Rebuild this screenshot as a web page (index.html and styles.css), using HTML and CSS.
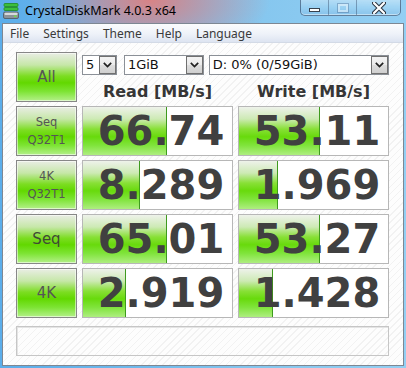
FILE: index.html
```html
<!DOCTYPE html>
<html lang="en">
<head>
    <meta charset="UTF-8">
    <title>CrystalDiskMark 4.0.3 x64</title>
    <link rel="stylesheet" href="styles.css">
</head>
<body>
    <div class="titlebar">
        <svg class="app-icon" width="16" height="16" viewBox="0 0 16 16">
            <rect x="1" y="0.5" width="14" height="3" rx="1" fill="#3cbf3c" stroke="#1f8a1f" stroke-width="0.8"/>
            <rect x="1" y="4.5" width="14" height="3" rx="1" fill="#3cbf3c" stroke="#1f8a1f" stroke-width="0.8"/>
            <rect x="0.5" y="9" width="15" height="6.5" rx="1.5" fill="#8d9399" stroke="#4f555b" stroke-width="0.8"/>
            <rect x="1.5" y="9.8" width="13" height="2.2" rx="1" fill="#d6dadd"/>
            <rect x="11" y="12.5" width="2.5" height="1.5" fill="#6fe04a"/>
        </svg>
        <span class="title">CrystalDiskMark 4.0.3 x64</span>
        <div class="caption">
            <div class="cap min"><span class="min-glyph"></span></div>
            <div class="cap max"><span class="max-glyph"></span></div>
            <div class="cap close">
                <svg width="14" height="12" viewBox="0 0 14 12">
                    <path d="M2 1 L12 11 M12 1 L2 11" stroke="#2b3440" stroke-width="4.2" stroke-linecap="round"/>
                    <path d="M2 1 L12 11 M12 1 L2 11" stroke="#ffffff" stroke-width="2.2" stroke-linecap="round"/>
                </svg>
            </div>
        </div>
    </div>

    <div class="client">
        <div class="menubar">
            <span class="menu-item">File</span>
            <span class="menu-item">Settings</span>
            <span class="menu-item">Theme</span>
            <span class="menu-item">Help</span>
            <span class="menu-item">Language</span>
        </div>

        <div class="panel">
            <div class="grid">
                <div class="label all">All</div>
                <div class="top">
                    <div class="combos">
                        <div class="combo c-count">
                            <span class="combo-text">5</span>
                            <span class="combo-arrow"><svg width="9" height="6" viewBox="0 0 9 6"><path d="M0.8 0.8 L4.5 4.6 L8.2 0.8" fill="none" stroke="#222" stroke-width="1.7"/></svg></span>
                        </div>
                        <div class="combo c-size">
                            <span class="combo-text">1GiB</span>
                            <span class="combo-arrow"><svg width="9" height="6" viewBox="0 0 9 6"><path d="M0.8 0.8 L4.5 4.6 L8.2 0.8" fill="none" stroke="#222" stroke-width="1.7"/></svg></span>
                        </div>
                        <div class="combo c-drive">
                            <span class="combo-text">D: 0% (0/59GiB)</span>
                            <span class="combo-arrow"><svg width="9" height="6" viewBox="0 0 9 6"><path d="M0.8 0.8 L4.5 4.6 L8.2 0.8" fill="none" stroke="#222" stroke-width="1.7"/></svg></span>
                        </div>
                    </div>
                    <div class="head">Read [MB/s]</div>
                    <div class="head">Write [MB/s]</div>
                </div>

                <div class="label">Seq<br>Q32T1</div>
                <div class="cell"><div class="fill" style="width: 84px"></div><div class="num">66.74</div></div>
                <div class="cell"><div class="fill" style="width: 81px"></div><div class="num">53.11</div></div>

                <div class="label">4K<br>Q32T1</div>
                <div class="cell"><div class="fill" style="width: 57px"></div><div class="num">8.289</div></div>
                <div class="cell"><div class="fill" style="width: 39px"></div><div class="num">1.969</div></div>

                <div class="label big seq">Seq</div>
                <div class="cell"><div class="fill" style="width: 84px"></div><div class="num">65.01</div></div>
                <div class="cell"><div class="fill" style="width: 81px"></div><div class="num">53.27</div></div>

                <div class="label big">4K</div>
                <div class="cell"><div class="fill" style="width: 43px"></div><div class="num">2.919</div></div>
                <div class="cell"><div class="fill" style="width: 34px"></div><div class="num">1.428</div></div>
            </div>

            <div class="comment"></div>
        </div>
    </div>
</body>
</html>
```

FILE: styles.css
```css
* {
    box-sizing: border-box;
}
body {
    margin: 0;
    width: 406px;
    height: 368px;
    overflow: hidden;
    font-family: "DejaVu Sans", Verdana, sans-serif;
    background:
        radial-gradient(ellipse 120px 60px at 150px 0px, rgba(222, 128, 128, 0.95), rgba(222, 140, 150, 0) 100%),
        linear-gradient(to right, #5badea 0%, #6cb8ec 30%, #86c7ef 65%, #93cff3 100%);
}

/* title bar */
.titlebar {
    height: 23px;
    display: flex;
    align-items: flex-start;
}
.app-icon {
    margin: 3px 0 0 3px;
    flex: none;
}
.title {
    margin: 2px 0 0 6px;
    font: 12.5px/18px "Noto Sans", sans-serif;
    color: #000;
}
.caption {
    margin-left: auto;
    margin-right: 5px;
    display: flex;
    height: 16px;
    border: 1px solid rgba(30, 50, 80, 0.55);
    border-top: none;
    border-radius: 0 0 5px 5px;
    overflow: hidden;
    background: linear-gradient(rgba(255, 255, 255, 0.35), rgba(255, 255, 255, 0.12) 50%, rgba(120, 170, 215, 0.25));
    box-shadow: inset 0 -1px 0 rgba(255, 255, 255, 0.45);
}
.cap {
    display: flex;
    align-items: center;
    justify-content: center;
    border-left: 1px solid rgba(40, 60, 90, 0.4);
}
.cap.min {
    width: 27px;
    border-left: none;
}
.cap.max {
    width: 28px;
}
.cap.close {
    width: 44px;
}
.min-glyph {
    width: 11px;
    height: 4px;
    margin-top: 5px;
    background: #fff;
    border: 1px solid #38424e;
}
.max-glyph {
    width: 10px;
    height: 8px;
    border: 2px solid rgba(255, 255, 255, 0.45);
    outline: 1px solid rgba(60, 90, 130, 0.35);
}

/* client area */
.client {
    margin: 0 2px;
    height: 343px;
    border: 1px solid #7d8793;
    display: flex;
    flex-direction: column;
    background: #fff;
}
.menubar {
    height: 19px;
    flex: none;
    display: flex;
    align-items: center;
    background: linear-gradient(#fbfcfe, #eef2f9 55%, #dde4f1);
    border-bottom: 1px solid #d3dae6;
    font: 12px "Noto Sans", sans-serif;
    color: #3a3a3a;
}
.menu-item {
    padding: 0 7px;
}
.panel {
    flex: 1;
    padding: 9px 0 0 13px;
    background: repeating-linear-gradient(135deg, #f2f2f2 0 1px, #fdfdfd 1px 5px);
}

/* result grid */
.grid {
    display: grid;
    grid-template-columns: 61px 151px 151px;
    grid-auto-rows: 50px;
    column-gap: 5px;
    row-gap: 4px;
}
.top {
    grid-column: 2 / span 2;
    display: grid;
    grid-template-columns: 151px 151px;
    grid-template-rows: 20px auto;
    column-gap: 5px;
    row-gap: 7px;
    padding-top: 3px;
}
.combos {
    grid-column: 1 / span 2;
    display: flex;
}
.combo {
    display: flex;
    height: 20px;
    border: 1px solid #8b9097;
    background: #fff;
}
.c-count {
    width: 35px;
    margin-right: 7px;
}
.c-size {
    width: 80px;
    margin-right: 5px;
}
.c-drive {
    width: 181px;
}
.combo-text {
    flex: 1;
    padding-left: 3px;
    font: 13px/18px "DejaVu Sans", sans-serif;
    color: #111;
    white-space: nowrap;
}
.combo-arrow {
    width: 17px;
    display: flex;
    align-items: center;
    justify-content: center;
    border: 1px solid #707070;
    background: linear-gradient(#f3f3f3, #ebebeb 48%, #dddddd 52%, #cfcfcf);
}
.head {
    text-align: center;
    font: bold 16px/19px "DejaVu Sans", sans-serif;
    color: #363636;
}

.label {
    display: flex;
    align-items: center;
    justify-content: center;
    text-align: center;
    border: 1px solid #878787;
    box-shadow: inset 0 0 0 1px rgba(255, 255, 255, 0.55);
    background: linear-gradient(#e9ede4 0%, #c6e7a8 25%, #7cdd22 48%, #62d800 62%, #7de434 80%, #b4f08a 100%);
    color: #555;
    font-size: 11.5px;
    line-height: 18px;
}
.label.all,
.label.big {
    font-size: 15px;
}
.label.seq {
    color: #3f4a35;
}

.cell {
    position: relative;
    overflow: hidden;
    background: #fff;
    border: 1px solid #b7b7b7;
}
.fill {
    position: absolute;
    left: 0;
    top: 0;
    bottom: 0;
    border-right: 1px solid #3e9a1e;
    background: linear-gradient(#eef2ea 0%, #cdeab4 25%, #88e036 46%, #68da0c 62%, #80e43c 80%, #aeee80 100%);
}
.num {
    position: relative;
    text-align: center;
    font: bold 40px/48px "DejaVu Sans", sans-serif;
    color: #404040;
    padding-left: 7px;
}

.comment {
    margin-top: 8px;
    width: 373px;
    height: 30px;
    border: 1px solid #c6c6c6;
    box-shadow: inset 1px 1px 0 #e4e4e4;
}
```
